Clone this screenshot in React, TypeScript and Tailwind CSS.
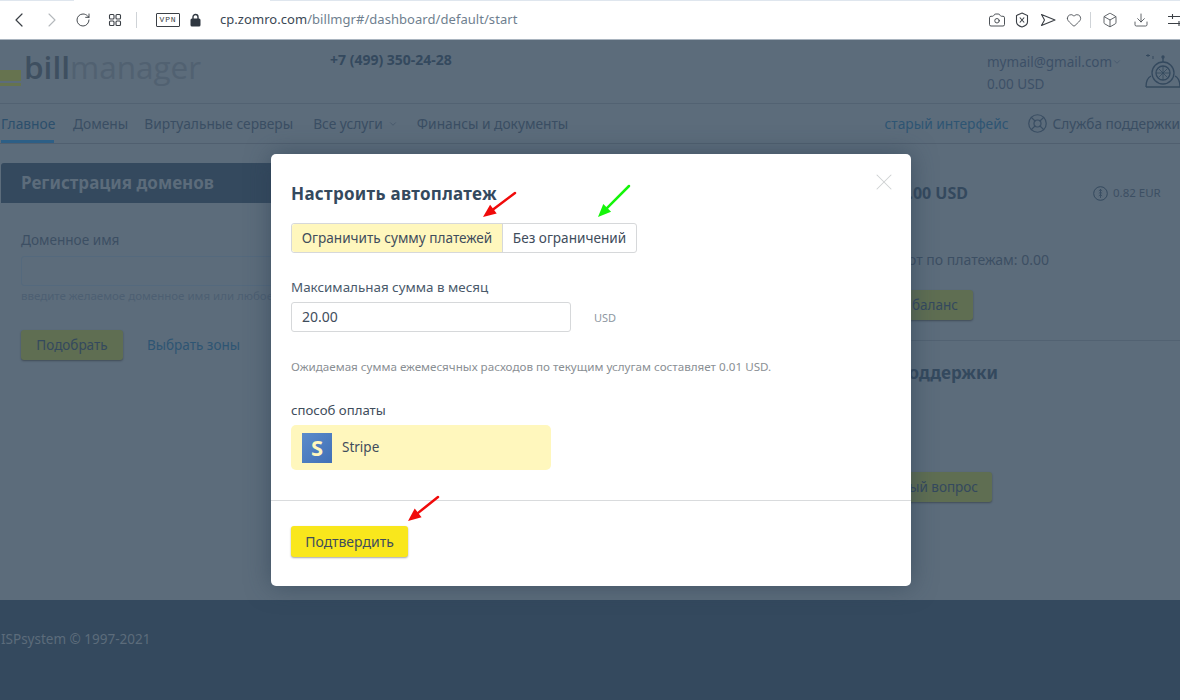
import React from 'react';
import { ChevronLeft, ChevronRight, RotateCw, Camera, Heart, Box, Download, ChevronDown, LifeBuoy, X } from 'lucide-react';

const Arrow = ({ x1, y1, x2, y2, color }: { x1: number; y1: number; x2: number; y2: number; color: string }) => {
  const a = Math.atan2(y2 - y1, x2 - x1);
  const len = 13;
  const w = 5.5;
  const bx = x2 - Math.cos(a) * len;
  const by = y2 - Math.sin(a) * len;
  const px = -Math.sin(a) * w;
  const py = Math.cos(a) * w;
  return (
    <svg className="absolute left-0 top-0 pointer-events-none" width="1180" height="700">
      <line x1={x1} y1={y1} x2={bx} y2={by} stroke={color} strokeWidth="2.5" strokeLinecap="round" />
      <polygon points={`${x2},${y2} ${bx + px},${by + py} ${bx - px},${by - py}`} fill={color} />
    </svg>
  );
};

const App: React.FC = () => {
  return (
    <div className="relative w-[1180px] h-[700px] overflow-hidden flex flex-col text-[#34495e] bg-[#5c6c7b] font-['Noto_Sans','Open_Sans',sans-serif]">
      {/* browser toolbar */}
      <div className="h-10 shrink-0 bg-white border-b border-[#a9b4bf] flex items-center relative text-[#3a3f45]">
        <div className="absolute top-0 left-0 right-0 h-px bg-[#dfe6ee]" />
        <div className="absolute top-0 left-[74px] w-[196px] h-px bg-white" />
        <ChevronLeft size={24} strokeWidth={1.2} className="ml-[7px]" />
        <ChevronRight size={24} strokeWidth={1.1} className="ml-[9px] text-[#b4b8bc]" />
        <RotateCw size={16} strokeWidth={1.4} className="ml-[11px]" />
        <svg className="ml-[17px]" width="14" height="14" viewBox="0 0 14 14" fill="none" stroke="#3a3f45" strokeWidth="1.1">
          <rect x="1.5" y="1.5" width="4.5" height="4.5" rx="1" />
          <rect x="8" y="1.5" width="4.5" height="4.5" rx="1" />
          <rect x="1.5" y="8" width="4.5" height="4.5" rx="1" />
          <rect x="8" y="8" width="4.5" height="4.5" rx="1" />
        </svg>
        <div className="ml-[14px] w-px h-[16px] bg-[#cfd3d7]" />
        <div className="ml-[19px] w-[24px] h-[14px] border border-[#3a3f45] rounded-[1px] text-[8px] leading-[12px] text-center tracking-[0.8px] font-['Liberation_Mono',monospace]">VPN</div>
        <svg className="ml-[10px]" width="11" height="14" viewBox="0 0 11 14">
          <path d="M3 6V4a2.5 2.5 0 0 1 5 0v2" fill="none" stroke="#2f3740" strokeWidth="1.4" />
          <rect x="0.5" y="5.5" width="10" height="8" rx="1.5" fill="#2f3740" />
        </svg>
        <div className="ml-[19px] text-[13px] tracking-[0.05px] text-[#6f7f8f]">
          <span className="text-[#3a4754]">cp.zomro.com</span>/billmgr#/dashboard/default/start
        </div>
        <div className="ml-auto flex items-center mr-[-4px]">
          <Camera size={18} strokeWidth={1.2} />
          <svg className="ml-[9px]" width="14" height="16" viewBox="0 0 14 16" fill="none" stroke="#3a3f45" strokeWidth="1.1">
            <path d="M7 1l5.5 2.5v6.5c0 2-2.5 4-5.5 5-3-1-5.5-3-5.5-5V3.5z" />
            <path d="M4.8 5.5l4.4 5M9.2 5.5l-4.4 5" />
          </svg>
          <svg className="ml-[11px]" width="16" height="16" viewBox="0 0 16 16" fill="none" stroke="#3a3f45" strokeWidth="1.1" strokeLinejoin="round">
            <path d="M1.5 2.5L15 8 1.5 13.5 4.5 8z" />
          </svg>
          <Heart size={16} strokeWidth={1.2} className="ml-[10px]" />
          <div className="ml-[8px] w-px h-[16px] bg-[#cfd3d7]" />
          <Box size={16} strokeWidth={1.2} className="ml-[11px]" />
          <Download size={16} strokeWidth={1.2} className="ml-[15px]" />
          <svg className="ml-[19px]" width="16" height="14" viewBox="0 0 16 14" fill="none" stroke="#3a3f45" strokeWidth="1.1">
            <path d="M0 3.5h16M0 10.5h16M4.5 1v5M11 8v5" />
          </svg>
        </div>
      </div>

      {/* header */}
      <div className="h-[64px] shrink-0 border-b border-[#526272] flex relative">
        <div className="w-[330px] flex items-start">
          <div className="mt-[30px] w-[21px] flex flex-col gap-[2px] shrink-0">
            <div className="h-[11px] bg-[#66734f]" />
            <div className="h-[3px] bg-[#66734f]" />
          </div>
          <div className="ml-[3px] mt-[3px] text-[31.5px] leading-[48px] font-['Open_Sans',sans-serif]">
            <span className="text-[#3e4f60] font-semibold">bill</span><span className="text-[#516171]">manager</span>
          </div>
        </div>
        <div className="mt-[10px] text-[14px] leading-[19px] font-bold text-[#34495e]">+7 (499) 350-24-28</div>
        <div className="ml-auto w-[193px] pt-[11px] text-[13.5px] leading-[22px] text-[#3c5067]">
          <div className="flex items-center">mymail@gmail.com<ChevronDown size={10} strokeWidth={1.4} /></div>
          <div>0.00 USD</div>
        </div>
        <svg className="absolute left-[1145px] top-[13px]" width="37" height="36" viewBox="0 0 37 36" fill="none" stroke="#34495e" strokeWidth="1.3">
          <circle cx="18" cy="20" r="11" />
          <circle cx="18" cy="20" r="7" />
          <path d="M13.5 15.5l9 9M22.5 15.5l-9 9M18 13v14M11 20h14" strokeWidth="0.8" />
          <path d="M18 9V5" />
          <circle cx="18" cy="4" r="1" />
          <path d="M1 34c0-5 1-9 5-11M35 34c0-5-1-9-5-11M1 34h34" />
          <path d="M3 1v3M1 2.5h4M8 3v3" strokeWidth="1" />
        </svg>
      </div>

      {/* nav */}
      <div className="h-[40px] shrink-0 border-b border-[#505f6f] flex items-stretch text-[13.75px] text-[#3a4e63]">
        <div className="ml-px h-[39px] w-[53px] border-b-[3px] border-[#2d5f86] leading-[40px] text-[#2c4f6c] whitespace-nowrap">Главное</div>
        <div className="ml-[19px] leading-[40px]">Домены</div>
        <div className="ml-[16px] leading-[40px]">Виртуальные серверы</div>
        <div className="ml-5 leading-[40px] flex items-center gap-[5px]">Все услуги<ChevronDown size={10} strokeWidth={1.4} /></div>
        <div className="ml-[19px] leading-[40px]">Финансы и документы</div>
        <div className="ml-auto leading-[40px] text-[#2e5573]">старый интерфейс</div>
        <LifeBuoy size={21} strokeWidth={1.4} className="ml-[19px] mt-[9px]" />
        <div className="ml-[4px] leading-[40px] whitespace-nowrap text-[13.6px]">Служба поддержки</div>
      </div>

      {/* page content */}
      <div className="flex-1 flex min-h-0 pt-[19px]">
        <div className="ml-px w-[899px] shrink-0">
          <div className="h-10 bg-[#34495e] rounded-t-[3px] pl-5 text-[17px] leading-[40px] font-bold text-[#5c6c7b]">Регистрация доменов</div>
          <div className="pl-5 pt-[27px]">
            <div className="text-[13.6px] leading-[20px] text-[#3c4f63]">Доменное имя</div>
            <div className="mt-[6px] h-[30px] border border-[#54697d] rounded-[3px]" />
            <div className="mt-[3px] text-[11.5px] leading-[14px] text-[#4d5f72] whitespace-nowrap">введите желаемое доменное имя или любое</div>
            <div className="mt-[27px] flex items-center">
              <div className="w-[102px] h-[30px] rounded-[3px] bg-[#5f6e52] shadow-[0_1px_2px_rgba(0,0,0,0.3)] text-center text-[13.5px] leading-[30px] text-[#34495e]">Подобрать</div>
              <div className="ml-6 text-[13.5px] text-[#2e5573]">Выбрать зоны</div>
            </div>
          </div>
        </div>
        <div className="flex-1 min-w-0 border-l border-transparent">
          <div className="flex items-center pt-[20px] h-[40px]">
            <div className="ml-[-76px] w-[143px] text-right text-[16px] font-bold text-[#34495e] whitespace-nowrap">0.00 USD</div>
            <svg className="ml-[125px]" width="15" height="15" viewBox="0 0 15 15" fill="none" stroke="#34495e" strokeWidth="1">
              <circle cx="7.5" cy="7.5" r="6.8" />
              <path d="M7.5 3v9M5.8 5l1.7-1.5L9.2 5M5.8 7.5L7.5 6l1.7 1.5M5.8 10l1.7-1.5L9.2 10" strokeWidth="0.8" />
            </svg>
            <div className="ml-[5px] text-[11.5px] text-[#3c4f63]">0.82 EUR</div>
          </div>
          <div className="mt-[48px] ml-[-60px] w-[208px] text-right text-[14px] leading-[18px] text-[#3c4f63] whitespace-nowrap">Оборот по платежам: 0.00</div>
          <div className="mt-[21px] ml-[-90px] w-[162px] h-[30px] rounded-[3px] bg-[#5f6e52] shadow-[0_1px_2px_rgba(0,0,0,0.3)] text-right pr-[15px] text-[13.5px] leading-[30px]">баланс</div>
          <div className="mt-[20px] border-t border-[#526272]" />
          <div className="mt-[21px] ml-[-90px] text-right w-[187px] text-[17px] leading-[22px] font-bold whitespace-nowrap">Служба поддержки</div>
          <div className="mt-[88px] ml-[-90px] w-[181px] h-[30px] rounded-[3px] bg-[#5f6e52] shadow-[0_1px_2px_rgba(0,0,0,0.3)] text-right pr-[14px] text-[13.5px] leading-[30px]">Новый вопрос</div>
        </div>
      </div>

      {/* footer */}
      <div className="h-[100px] shrink-0 bg-[#34495e] pl-px pt-[30px] text-[13.5px] leading-[18px] text-[#5c6c7b]">ISPsystem © 1997-2021</div>

      {/* modal */}
      <div className="absolute left-[271px] top-[154px] w-[640px] h-[432px] bg-white rounded-[5px] shadow-[0_0_24px_rgba(40,60,80,0.55)] text-[#3f4d5c]">
        <X size={28} strokeWidth={0.9} className="absolute right-[13px] top-[14px] text-[#cfd1d3]" />
        <div className="px-5 pt-[28px]">
          <div className="text-[17px] leading-[24px] font-bold tracking-[0.3px] text-[#34495e]">Настроить автоплатеж</div>
          <div className="mt-[17px] flex w-fit h-[30px] border border-[#d6d8da] rounded-[3px] text-[13.6px] leading-[28px] whitespace-nowrap">
            <div className="w-[211px] bg-[#fff7bd] text-center rounded-l-[3px] border-r border-[#d6d8da]">Ограничить сумму платежей</div>
            <div className="w-[133px] text-center">Без ограничений</div>
          </div>
          <div className="mt-[25px] text-[13.4px] leading-[19px] text-[#4a5a6b]">Максимальная сумма в месяц</div>
          <div className="mt-[5px] flex items-center">
            <div className="w-[280px] h-[30px] border border-[#d6d8da] rounded-[3px] pl-[10px] text-[14px] leading-[28px]">20.00</div>
            <div className="ml-[23px] mt-[2px] text-[11px] text-[#8d97a1]">USD</div>
          </div>
          <div className="mt-[27px] text-[11.65px] leading-[16px] text-[#8a8f94] whitespace-nowrap">Ожидаемая сумма ежемесячных расходов по текущим услугам составляет 0.01 USD.</div>
          <div className="mt-[26px] text-[13.2px] leading-[19px]">способ оплаты</div>
          <div className="mt-[5px] w-[260px] h-[45px] rounded-[5px] bg-[#fff7bd] flex items-center pl-[11px]">
            <div className="w-[30px] h-[30px] bg-gradient-to-br from-[#5b8ccb] to-[#4170b6] text-center text-[22px] leading-[29px] font-bold text-[#fff7bd]">S</div>
            <div className="ml-[10px] text-[13.5px]">Stripe</div>
          </div>
        </div>
        <div className="mt-[30px] border-t border-[#d9dbdd]" />
        <div className="pl-5 pt-[25px]">
          <div className="w-[117px] h-[31px] rounded-[3px] bg-[#f9e71c] shadow-[0_1px_2px_rgba(0,0,0,0.35)] text-center text-[14px] leading-[31px]">Подтвердить</div>
        </div>
      </div>

      {/* annotation arrows */}
      <Arrow x1={515} y1={193} x2={483} y2={217} color="#f00a0a" />
      <Arrow x1={629} y1={186} x2={598} y2={217} color="#14f50a" />
      <Arrow x1={438} y1={497} x2={408} y2={521} color="#f00a0a" />
    </div>
  );
};

export default App;
